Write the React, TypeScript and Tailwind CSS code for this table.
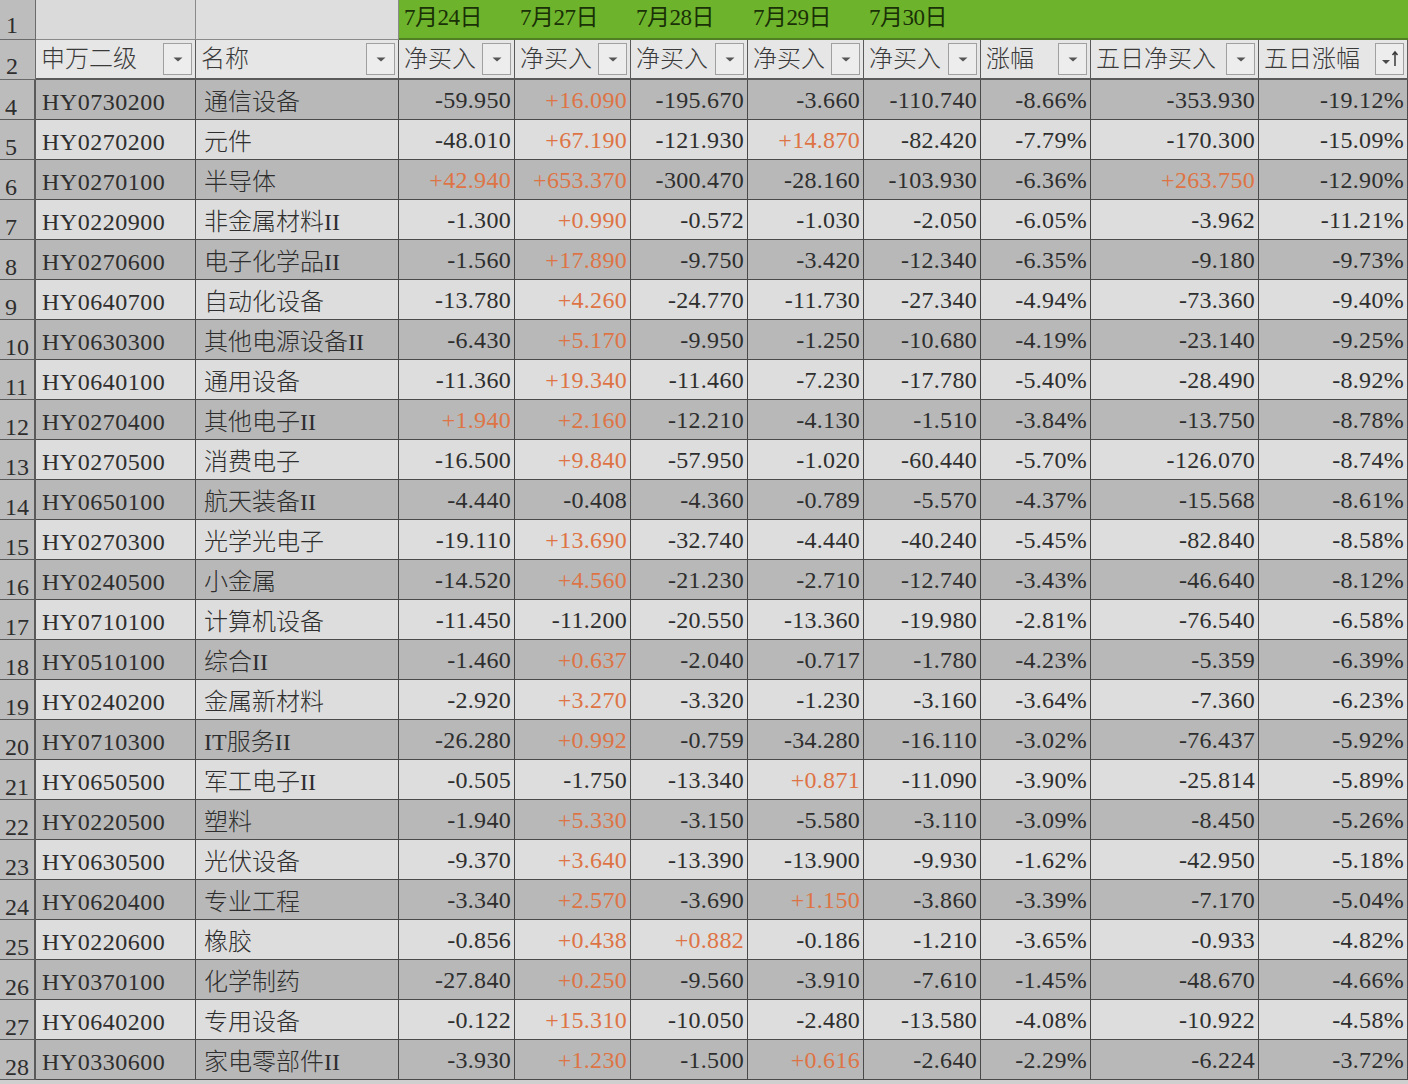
import React from 'react';

type Row = [number, string, string, string, string, string, string, string, string, string, string];

const rows: Row[] = [
  [4, 'HY0730200', '通信设备', '-59.950', '+16.090', '-195.670', '-3.660', '-110.740', '-8.66%', '-353.930', '-19.12%'],
  [5, 'HY0270200', '元件', '-48.010', '+67.190', '-121.930', '+14.870', '-82.420', '-7.79%', '-170.300', '-15.09%'],
  [6, 'HY0270100', '半导体', '+42.940', '+653.370', '-300.470', '-28.160', '-103.930', '-6.36%', '+263.750', '-12.90%'],
  [7, 'HY0220900', '非金属材料II', '-1.300', '+0.990', '-0.572', '-1.030', '-2.050', '-6.05%', '-3.962', '-11.21%'],
  [8, 'HY0270600', '电子化学品II', '-1.560', '+17.890', '-9.750', '-3.420', '-12.340', '-6.35%', '-9.180', '-9.73%'],
  [9, 'HY0640700', '自动化设备', '-13.780', '+4.260', '-24.770', '-11.730', '-27.340', '-4.94%', '-73.360', '-9.40%'],
  [10, 'HY0630300', '其他电源设备II', '-6.430', '+5.170', '-9.950', '-1.250', '-10.680', '-4.19%', '-23.140', '-9.25%'],
  [11, 'HY0640100', '通用设备', '-11.360', '+19.340', '-11.460', '-7.230', '-17.780', '-5.40%', '-28.490', '-8.92%'],
  [12, 'HY0270400', '其他电子II', '+1.940', '+2.160', '-12.210', '-4.130', '-1.510', '-3.84%', '-13.750', '-8.78%'],
  [13, 'HY0270500', '消费电子', '-16.500', '+9.840', '-57.950', '-1.020', '-60.440', '-5.70%', '-126.070', '-8.74%'],
  [14, 'HY0650100', '航天装备II', '-4.440', '-0.408', '-4.360', '-0.789', '-5.570', '-4.37%', '-15.568', '-8.61%'],
  [15, 'HY0270300', '光学光电子', '-19.110', '+13.690', '-32.740', '-4.440', '-40.240', '-5.45%', '-82.840', '-8.58%'],
  [16, 'HY0240500', '小金属', '-14.520', '+4.560', '-21.230', '-2.710', '-12.740', '-3.43%', '-46.640', '-8.12%'],
  [17, 'HY0710100', '计算机设备', '-11.450', '-11.200', '-20.550', '-13.360', '-19.980', '-2.81%', '-76.540', '-6.58%'],
  [18, 'HY0510100', '综合II', '-1.460', '+0.637', '-2.040', '-0.717', '-1.780', '-4.23%', '-5.359', '-6.39%'],
  [19, 'HY0240200', '金属新材料', '-2.920', '+3.270', '-3.320', '-1.230', '-3.160', '-3.64%', '-7.360', '-6.23%'],
  [20, 'HY0710300', 'IT服务II', '-26.280', '+0.992', '-0.759', '-34.280', '-16.110', '-3.02%', '-76.437', '-5.92%'],
  [21, 'HY0650500', '军工电子II', '-0.505', '-1.750', '-13.340', '+0.871', '-11.090', '-3.90%', '-25.814', '-5.89%'],
  [22, 'HY0220500', '塑料', '-1.940', '+5.330', '-3.150', '-5.580', '-3.110', '-3.09%', '-8.450', '-5.26%'],
  [23, 'HY0630500', '光伏设备', '-9.370', '+3.640', '-13.390', '-13.900', '-9.930', '-1.62%', '-42.950', '-5.18%'],
  [24, 'HY0620400', '专业工程', '-3.340', '+2.570', '-3.690', '+1.150', '-3.860', '-3.39%', '-7.170', '-5.04%'],
  [25, 'HY0220600', '橡胶', '-0.856', '+0.438', '+0.882', '-0.186', '-1.210', '-3.65%', '-0.933', '-4.82%'],
  [26, 'HY0370100', '化学制药', '-27.840', '+0.250', '-9.560', '-3.910', '-7.610', '-1.45%', '-48.670', '-4.66%'],
  [27, 'HY0640200', '专用设备', '-0.122', '+15.310', '-10.050', '-2.480', '-13.580', '-4.08%', '-10.922', '-4.58%'],
  [28, 'HY0330600', '家电零部件II', '-3.930', '+1.230', '-1.500', '+0.616', '-2.640', '-2.29%', '-6.224', '-3.72%'],
];

const headers = ['申万二级', '名称', '净买入', '净买入', '净买入', '净买入', '净买入', '涨幅', '五日净买入', '五日涨幅'];
const dates = ['7月24日', '7月27日', '7月28日', '7月29日', '7月30日', '', '', ''];

const cols = 'grid grid-cols-[36px_160px_203px_116px_116px_117px_116px_117px_110px_168px_149px]';
const font = { fontFamily: '"Liberation Serif", "Noto Sans CJK SC", serif' };

// 筛选按钮（最后一列带排序箭头）
const FilterButton: React.FC<{ sort?: boolean }> = ({ sort }) => (
  <span className="ml-auto mr-[3px] flex h-[32px] w-[29px] shrink-0 items-center justify-center border border-[#a0a0a0] bg-[#ededed]">
    <svg width="20" height="20" viewBox="0 0 20 20">
      {sort ? (
        <>
          <path d="M2 11 L10 11 L6 15 Z" fill="#4a4a4a" />
          <path d="M15 17 L15 3 M12.5 6 L15 3 L17.5 6" stroke="#3a3a3a" strokeWidth="1.5" fill="none" />
        </>
      ) : (
        <path d="M5.5 8.5 L14.5 8.5 L10 12.5 Z" fill="#555" />
      )}
    </svg>
  </span>
);

export default function App() {
  return (
    <div className="h-[1084px] w-[1408px] overflow-hidden bg-[#cfcfcf] text-[#2e2e2e]" style={font}>
      {/* 第1行：日期 */}
      <div className={`${cols} h-[40px]`}>
        <div className="flex items-end border-b border-r border-[#6a6a6a] bg-[#bdbdbd] pb-[2px] pl-[6px] text-[24px] leading-none">1</div>
        <div className="border-b border-r border-[#8a8a8a] bg-[#dadada]" />
        <div className="border-b border-r border-[#8a8a8a] bg-[#dedede]" />
        {dates.map((d, i) => (
          <div key={i} className="flex items-center border-b-2 border-[#4f7f22] bg-[#6db42c] pb-[4px] pl-[5px] text-[23px] leading-none tracking-[-0.5px] text-[#1a3006]">
            {d}
          </div>
        ))}
      </div>

      {/* 第2行：表头 */}
      <div className={`${cols} h-[40px]`}>
        <div className="flex items-end border-b border-r border-[#6a6a6a] bg-[#bdbdbd] pb-[1px] pl-[6px] text-[24px] leading-none">2</div>
        {headers.map((h, i) => (
          <div key={i} className="flex items-center border-b-2 border-r border-[#5a5a5a] bg-[#e6e6e6] pl-[5px] text-[24px] font-light leading-none text-[#3a3a3a]">
            <span className="whitespace-nowrap">{h}</span>
            <FilterButton sort={i === headers.length - 1} />
          </div>
        ))}
      </div>

      {/* 数据行 */}
      {rows.map((r, idx) => {
        const dark = idx % 2 === 0;
        const bg = dark ? 'bg-[#b8b8b8]' : 'bg-[#dddddd]';
        return (
          <div key={r[0]} className={`${cols} h-[40px]`}>
            <div className="flex items-end border-b border-r-2 border-[#5a5a5a] bg-[#bcbcbc] pl-[5px] text-[24px] leading-none whitespace-nowrap">
              {r[0]}
            </div>
            <div className={`flex items-center border-b border-r border-[#4a4a4a] ${bg} pl-[6px] pt-[4px] text-[24px] leading-none tracking-[0.5px]`}>
              {r[1]}
            </div>
            <div className={`flex items-center border-b border-r border-[#4a4a4a] ${bg} pl-[8px] pt-[4px] text-[24px] font-light leading-none whitespace-nowrap`}>
              {r[2]}
            </div>
            {r.slice(3).map((v, j) => (
              <div
                key={j}
                className={`flex items-center justify-end border-b border-r border-[#4a4a4a] ${bg} pr-[3px] text-[24px] leading-none tracking-[0.3px] ${
                  (v as string).startsWith('+') ? 'text-[#de7445]' : ''
                }`}
              >
                {v}
              </div>
            ))}
          </div>
        );
      })}
    </div>
  );
}
